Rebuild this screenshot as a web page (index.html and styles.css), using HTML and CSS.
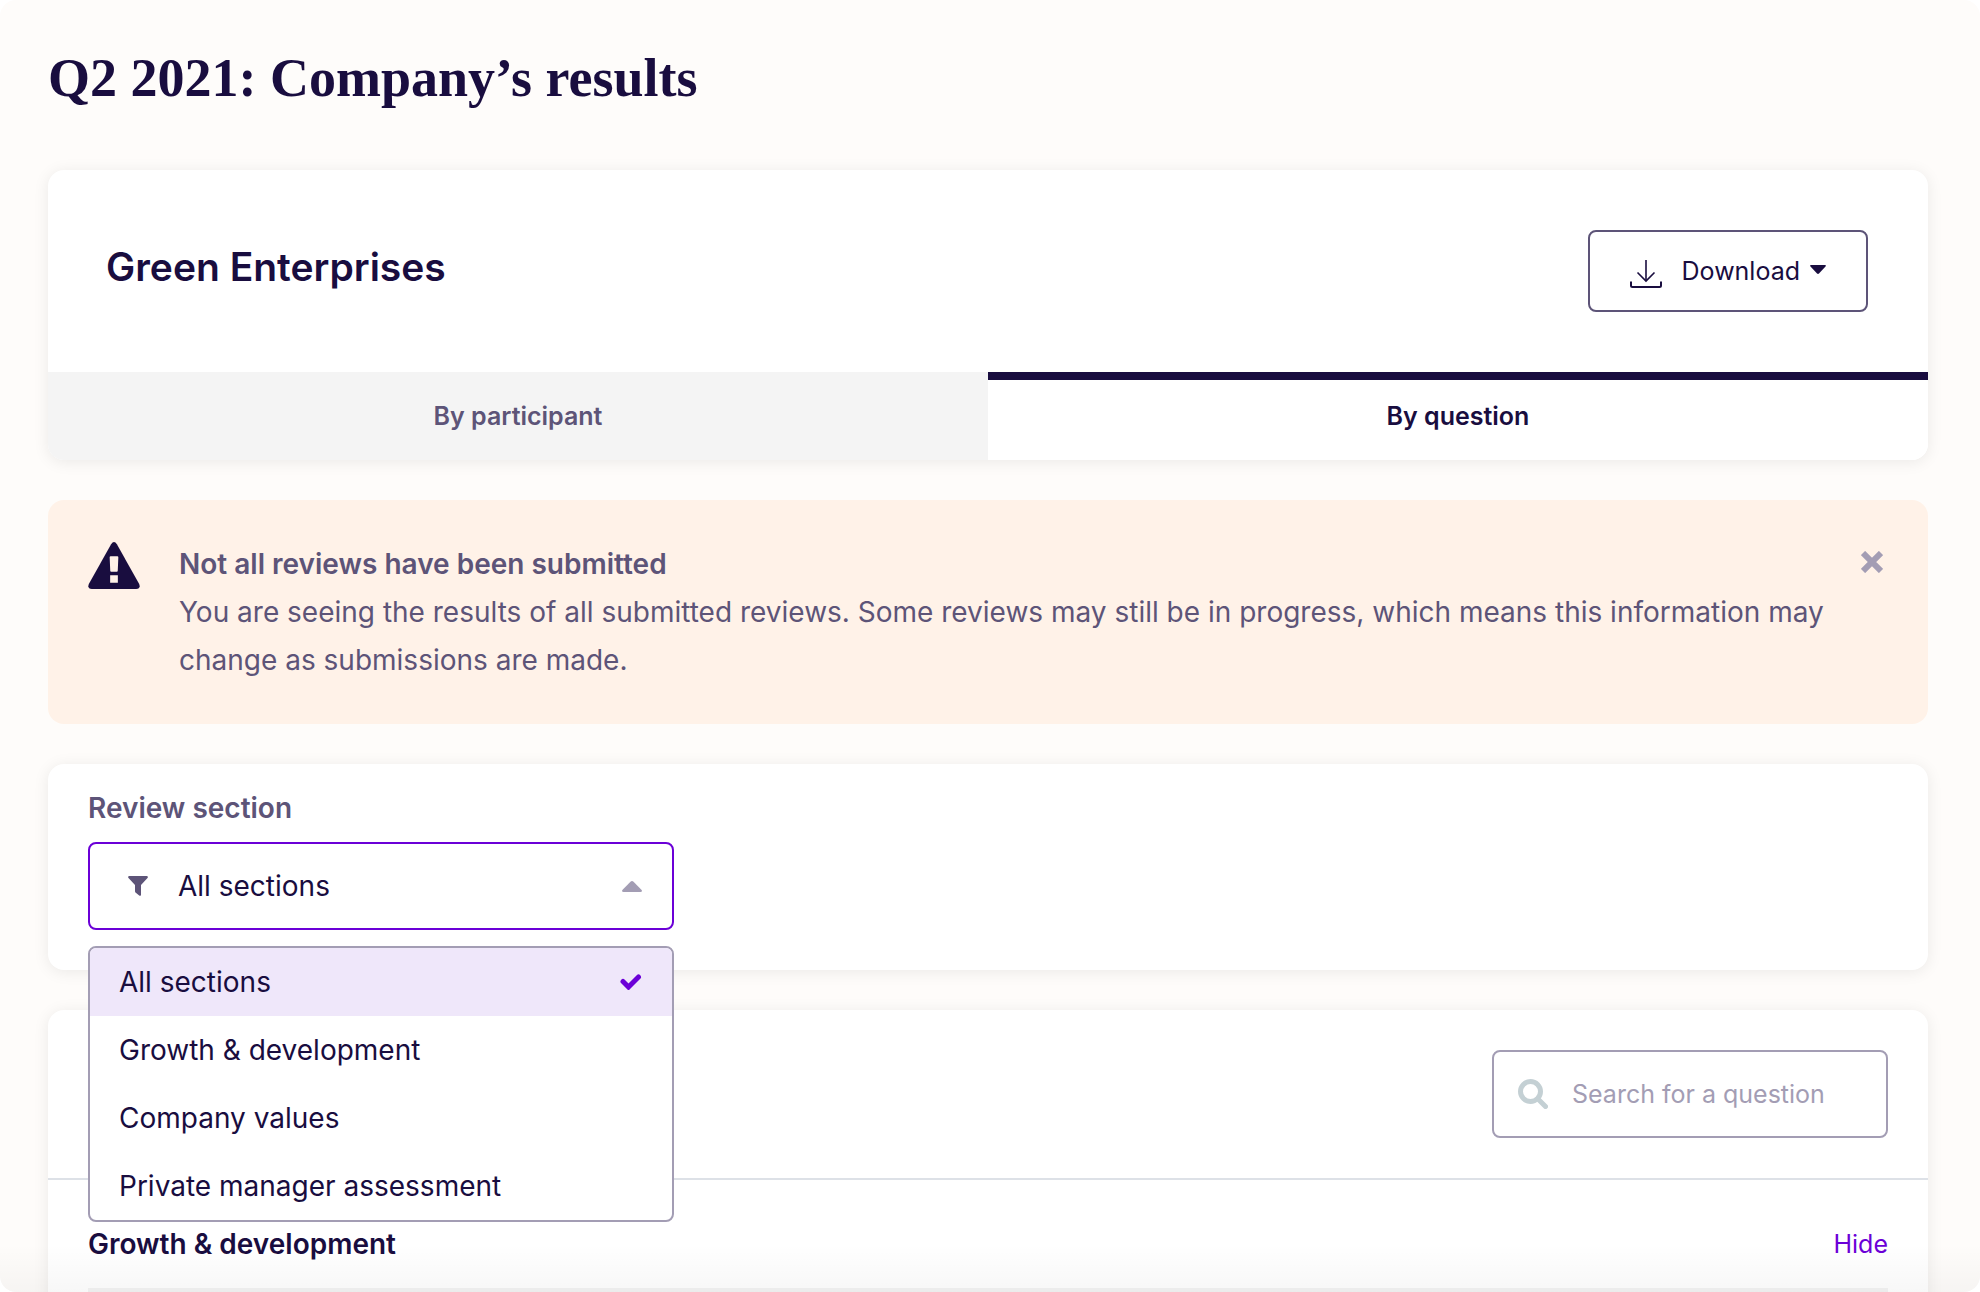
FILE: index.html
```html
<!DOCTYPE html>
<html lang="en">

<head>
	<meta charset="utf-8">
	<title>Q2 2021: Company’s results</title>
	<link rel="stylesheet" href="styles.css">
</head>

<body>
	<main class="page">
		<h1 class="page-title">Q2 2021: Company’s results</h1>

		<section class="card">
			<div class="card-header">
				<h2 class="company">Green Enterprises</h2>
				<button type="button" class="download">
					<svg class="download-icon" width="32" height="30" viewBox="0 0 32 30" fill="none" stroke="currentColor" stroke-width="2">
						<path d="M16 1v21" stroke-width="1.6" />
						<path d="M7.500 13.500l8.500 8.500 8.500-8.500" stroke-width="1.6" />
						<path d="M1 22.500v4q0 1.500 1.500 1.500h27q1.500 0 1.500-1.500v-4" />
					</svg>
					<span>Download</span>
					<svg class="caret" width="16" height="9" viewBox="0 0 16 9" fill="currentColor"><path d="M1 0h14q1.500.4.500 1.600L9 8.500q-1 .8-2 0L.5 1.600Q-.5.4 1 0z" /></svg>
				</button>
			</div>
			<div class="tabs" role="tablist">
				<button type="button" class="tab" role="tab" aria-selected="false">By participant</button>
				<button type="button" class="tab tab-active" role="tab" aria-selected="true">By question</button>
			</div>
		</section>

		<section class="alert">
			<svg class="alert-icon" width="52" height="50" viewBox="0 0 54 50">
				<path fill="#190d3f" d="M24 2.500q3-4.600 6 0L53 43.500q2.200 5-3 5.500h-46q-5.200-.5-3-5.500z" />
				<path fill="#fff2e8" d="M22.500 16q0-1 1-1h7q1 0 1 1l-.6 14q0 1-1 1h-5.800q-1 0-1-1zM23 34.500h8v8h-8z" />
			</svg>
			<div class="alert-text">
				<strong>Not all reviews have been submitted</strong>
				<p>You are seeing the results of all submitted reviews. Some reviews may still be in progress, which means this information may change as submissions are made.</p>
			</div>
			<button type="button" class="close" aria-label="Dismiss">
				<svg width="22" height="22" viewBox="0 0 22 22" stroke="currentColor" stroke-width="6"><path d="M2 2l18 18M20 2L2 20" /></svg>
			</button>
		</section>

		<section class="card filter">
			<span class="filter-label" id="section-label">Review section</span>
			<div class="dropdown">
				<button type="button" class="dropdown-toggle" aria-labelledby="section-label section-value" aria-haspopup="listbox" aria-expanded="true">
					<svg width="20" height="20" viewBox="0 0 20 20" fill="#5d5478"><path d="M1 0h18q1.500.5.500 2L13 9v10q-.5 1.300-1.800.6L7.500 16.500Q7 16 7 15V9L.5 2Q-.5.5 1 0z" /></svg>
					<span class="dropdown-value" id="section-value">All sections</span>
					<svg width="20" height="11" viewBox="0 0 20 11" fill="#a39db4"><path d="M1.500 11Q-.8 10.500.6 8.800L8.500.8q1.500-1.400 3 0l7.900 8q1.400 1.700-.9 2.200z" /></svg>
				</button>
				<ul class="menu" role="listbox" aria-labelledby="section-label">
					<li class="option option-selected" role="option" aria-selected="true">
						All sections
						<svg width="22" height="16" viewBox="0 0 22 16" fill="none" stroke="#6b00d7" stroke-width="5" stroke-linecap="round"><path d="M3 7.500l5.500 5.500L18.500 3" /></svg>
					</li>
					<li class="option" role="option">Growth &amp; development</li>
					<li class="option" role="option">Company values</li>
					<li class="option" role="option">Private manager assessment</li>
				</ul>
			</div>
		</section>

		<section class="card">
			<div class="search-bar">
				<label class="search">
					<svg width="30" height="30" viewBox="0 0 30 30" fill="none" stroke="#c4d0d4" stroke-width="5"><circle cx="12.500" cy="12.500" r="10" /><path d="M20 20l7.500 7.500" stroke-linecap="round" /></svg>
					<input type="search" placeholder="Search for a question" aria-label="Search for a question">
				</label>
			</div>
			<div class="question-group">
				<h3 class="group-title">Growth &amp; development</h3>
				<a href="#" class="hide">Hide</a>
			</div>
			<div class="questions"></div>
		</section>
	</main>
</body>

</html>
```
FILE: styles.css
```css
* {
	box-sizing: border-box;
}

html {
	background-color: #ffffff;
}

body {
	margin: 0;
	color: #190d3f;
	font-family: Inter, "Liberation Sans", sans-serif;
	font-size: 28px;
	line-height: 48px;
}

h1, h2, h3, p, ul {
	margin: 0;
	padding: 0;
}

button, input {
	color: inherit;
	font: inherit;
}

svg {
	display: block;
	flex: none;
}

.page {
	position: relative;
	display: flex;
	flex-direction: column;
	gap: 40px;
	height: 100vh;
	padding: 48px 52px 0 48px;
	overflow: hidden;
	background-color: #fefcfa;
	border-radius: 16px;
}

/* soft fade along the bottom edge */
.page::after {
	content: "";
	position: absolute;
	left: 0;
	right: 0;
	bottom: 0;
	height: 48px;
	background: linear-gradient(rgba(0, 0, 0, 0), rgba(0, 0, 0, 0.03));
	pointer-events: none;
}

.page-title {
	margin-bottom: 22px;
	font-family: "Liberation Serif", serif;
	font-size: 54px;
	font-weight: bold;
	line-height: 60px;
}

.card {
	flex: none;
	background-color: #ffffff;
	border-radius: 16px;
	box-shadow: 0 2px 16px rgba(0, 0, 0, 0.08);
}

.card-header {
	display: flex;
	align-items: flex-start;
	justify-content: space-between;
	padding: 60px 60px 60px 58px;
}

.company {
	font-size: 39px;
	font-weight: 600;
	line-height: 74px;
}

.download {
	display: flex;
	align-items: center;
	height: 82px;
	padding: 0 40px;
	background: none;
	border: 2px solid #5d5478;
	border-radius: 8px;
	font-size: 25px;
}

.download-icon {
	margin-right: 20px;
	margin-top: 6px;
}

.caret {
	margin-left: 10px;
	margin-bottom: 4px;
}

.tabs {
	display: flex;
}

.tab {
	flex: 1;
	height: 88px;
	background-color: #f4f4f4;
	border: 0;
	border-radius: 0 0 0 16px;
	color: #5d5478;
	font-size: 25px;
	font-weight: 600;
}

.tab-active {
	background-color: #ffffff;
	border-radius: 0 0 16px 0;
	box-shadow: inset 0 8px #190d3f;
	color: #190d3f;
}

.alert {
	display: flex;
	align-items: flex-start;
	padding: 40px;
	background-color: #fff2e8;
	border-radius: 16px;
	color: #5d5478;
}

.alert-icon {
	margin-top: 1px;
}

.alert-text {
	flex: 1;
	margin: 0 20px 0 39px;
}

.alert-text strong {
	font-weight: 600;
}

.close {
	margin: 11px 5px 0 0;
	padding: 0;
	background: none;
	border: 0;
	color: #a39db4;
}

.filter {
	height: 206px;
	padding: 20px 40px 40px;
}

.filter-label {
	display: block;
	margin-bottom: 10px;
	color: #5d5478;
	font-weight: 600;
}

.dropdown {
	position: relative;
	width: 586px;
}

.dropdown-toggle {
	display: flex;
	align-items: center;
	width: 100%;
	height: 88px;
	padding: 0 30px 0 38px;
	background-color: #ffffff;
	border: 2px solid #6b00d7;
	border-radius: 8px;
	text-align: left;
}

.dropdown-value {
	flex: 1;
	margin-left: 30px;
}

.menu {
	position: absolute;
	z-index: 1;
	top: 104px;
	left: 0;
	width: 100%;
	overflow: hidden;
	background-color: #ffffff;
	border: 2px solid #a39db4;
	border-radius: 8px;
	list-style: none;
}

.option {
	display: flex;
	align-items: center;
	justify-content: space-between;
	height: 68px;
	padding: 0 30px 0 29px;
}

.option-selected {
	background-color: #efe7fa;
}

.search-bar {
	display: flex;
	justify-content: flex-end;
	padding: 40px;
	border-bottom: 2px solid #dde1e7;
}

.search {
	display: flex;
	align-items: center;
	gap: 24px;
	width: 396px;
	height: 88px;
	padding: 0 24px;
	border: 2px solid #a39db4;
	border-radius: 8px;
}

.search input {
	flex: 1;
	min-width: 0;
	padding: 0;
	background: none;
	border: 0;
	outline: 0;
	font-size: 25px;
}

.search input::placeholder {
	color: #a39db4;
	opacity: 1;
}

.question-group {
	display: flex;
	align-items: center;
	justify-content: space-between;
	padding: 40px 40px 20px;
}

.group-title {
	font-size: 28px;
	font-weight: 600;
}

.hide {
	color: #6b00d7;
	font-size: 25px;
	text-decoration: none;
}

.questions {
	height: 120px;
	margin: 0 40px;
	background-color: #f3f3f3;
}
```
